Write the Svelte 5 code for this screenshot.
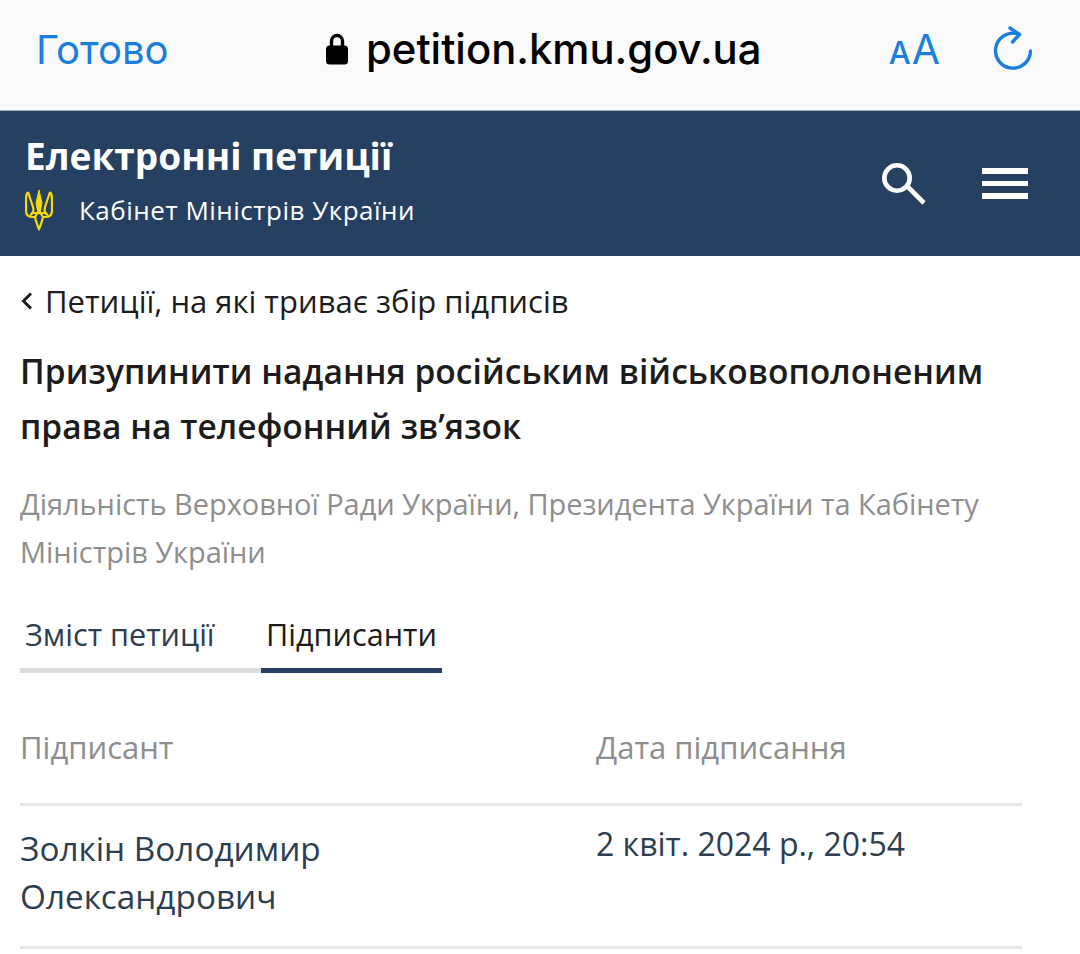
<script>
	let rows = [{ name: 'Золкін Володимир Олександрович', date: '2 квіт. 2024 р., 20:54' }];
</script>

<div class="page">
	<div class="browser">
		<span class="done">Готово</span>
		<div class="url">
			<svg class="lock" width="24" height="36" viewBox="0 0 24 36">
				<path d="M6.500 16V10a5.500 5.500 0 0 1 11 0v6" fill="none" stroke="#000" stroke-width="3.4" />
				<rect x="1" y="14.500" width="22" height="19" rx="3.500" fill="#000" />
			</svg>
			<span>petition.kmu.gov.ua</span>
		</div>
		<div class="tools">
			<span class="aa"><small>A</small>A</span>
			<svg width="42" height="48" viewBox="0 0 42 48" fill="none" stroke="#1a7fdc" stroke-width="3.4" stroke-linecap="round" stroke-linejoin="round">
				<path d="M37.500 26a17.500 17.500 0 1 1-14-17.500" />
				<path d="M17 3l9.500 6.500-7 7.500" />
			</svg>
		</div>
	</div>

	<header>
		<div>
			<div class="brand">Електронні петиції</div>
			<div class="cabinet">
				<svg width="28" height="42" viewBox="0 0 28 42" fill="none" stroke="#f5d90a" stroke-width="2.200">
					<path d="M3 3C1 5 1 7 1 10v12c0 4 3 6 7 6h2c1 4 2 8 4 12 2-4 3-8 4-12h2c4 0 7-2 7-6V10c0-3 0-5-2-7" />
					<path d="M3 3l5 15c1 4 0 7-3 8M25 3l-5 15c-1 4 0 7 3 8" />
					<path d="M14 1l-3 13 2 10h2l2-10z" fill="#f5d90a" stroke-width="1" />
					<path d="M6 24h16M10 28c1-2 2-4 4-4s3 2 4 4" />
				</svg>
				<span>Кабінет Міністрів України</span>
			</div>
		</div>
		<div class="actions">
			<svg width="46" height="46" viewBox="0 0 46 46" fill="none" stroke="#fff" stroke-width="4.600">
				<circle cx="15" cy="17" r="12.700" />
				<path d="M25 25l17 17" />
			</svg>
			<div class="burger"><i></i><i></i><i></i></div>
		</div>
	</header>

	<main>
		<div class="back">
			<svg width="14" height="18" viewBox="0 0 14 18" fill="none" stroke="#1c1c1c" stroke-width="3">
				<path d="M11 1.500L3.500 9l7.500 7.500" />
			</svg>
			<span>Петиції, на які триває збір підписів</span>
		</div>
		<h1>Призупинити надання російським військовополоненим права на телефонний зв’язок</h1>
		<p class="topic">Діяльність Верховної Ради України, Президента України та Кабінету Міністрів України</p>

		<div class="tabs">
			<div class="tab">Зміст петиції</div>
			<div class="tab active">Підписанти</div>
		</div>

		<div class="table">
			<div class="row head">
				<div>Підписант</div>
				<div>Дата підписання</div>
			</div>
			{#each rows as row}
				<div class="row">
					<div class="name">{row.name}</div>
					<div class="date">{row.date}</div>
				</div>
			{/each}
		</div>
	</main>
</div>

<style>
	:global(body) {
		margin: 0;
		background: #fff;
	}

	.page {
		width: 1080px;
		height: 954px;
		overflow: hidden;
		font-family: 'Open Sans', 'Noto Sans', sans-serif;
		color: #1c1c1c;
	}

	.browser {
		height: 111px;
		box-sizing: border-box;
		background: #f9f9f9;
		display: flex;
		align-items: center;
		padding: 0 45px 12px 36px;
		border-bottom: 1px solid #9fb0bd;
	}

	.done {
		width: 289px;
		font-family: Inter, sans-serif;
		font-size: 40px;
		color: #1a7fdc;
	}

	.url {
		flex: 1;
		display: flex;
		align-items: center;
		gap: 17px;
		font-family: Inter, sans-serif;
		font-size: 41.800px;
		font-weight: 500;
		color: #000;
	}

	.tools {
		display: flex;
		align-items: center;
		gap: 53px;
	}

	.aa {
		font-family: Inter, sans-serif;
		font-size: 41px;
		color: #1a7fdc;
	}

	.aa small {
		font-size: 31px;
		font-weight: 500;
		margin-right: 1px;
	}

	header {
		height: 145px;
		box-sizing: border-box;
		background: #254061;
		display: flex;
		align-items: center;
		justify-content: space-between;
		padding: 0 52px 0 25px;
		color: #fff;
	}

	.brand {
		font-size: 37px;
		font-weight: 700;
		line-height: 50px;
		margin-top: -6px;
	}

	.cabinet {
		display: flex;
		align-items: center;
		gap: 26px;
		font-size: 26px;
		margin-top: 8px;
		letter-spacing: 0.5px;
	}

	.actions {
		display: flex;
		align-items: center;
		gap: 54px;
	}

	.burger {
		width: 46px;
		display: flex;
		flex-direction: column;
		gap: 7px;
	}

	.burger i {
		height: 5.500px;
		background: #fff;
	}

	main {
		padding: 25px 58px 0 20px;
	}

	.back {
		display: flex;
		align-items: center;
		gap: 11px;
		font-size: 31px;
		line-height: 40px;
	}

	h1 {
		margin: 23px 0 0;
		font-size: 33.500px;
		font-weight: 600;
		line-height: 55px;
		letter-spacing: 0.06px;
		width: 1000px;
	}

	.topic {
		margin: 26px 0 0;
		font-size: 29px;
		letter-spacing: -0.06px;
		line-height: 48px;
		color: #8e8e8e;
		width: 1000px;
	}

	.tabs {
		display: flex;
		margin-top: 38px;
		font-size: 30.600px;
	}

	.tab {
		padding: 0 5px 14px;
		width: 231px;
		line-height: 40px;
		color: #2c3e50;
		border-bottom: 5px solid #dcdcdc;
	}

	.tab.active {
		width: auto;
		color: #1c1c1c;
		border-bottom-color: #254061;
	}

	.table {
		margin-top: 51px;
	}

	.row {
		display: grid;
		grid-template-columns: 576px 1fr;
		border-bottom: 3px solid #e6e6e6;
		padding: 18px 0 26px;
		font-size: 33.300px;
		line-height: 48px;
		color: #2c3e50;
	}

	.row.head {
		padding: 0 0 33px;
		font-size: 31px;
		line-height: 46px;
		color: #8e8e8e;
	}

	.name {
		width: 400px;
	}

	.date {
		margin-top: -4px;
		font-size: 32px;
	}
</style>
